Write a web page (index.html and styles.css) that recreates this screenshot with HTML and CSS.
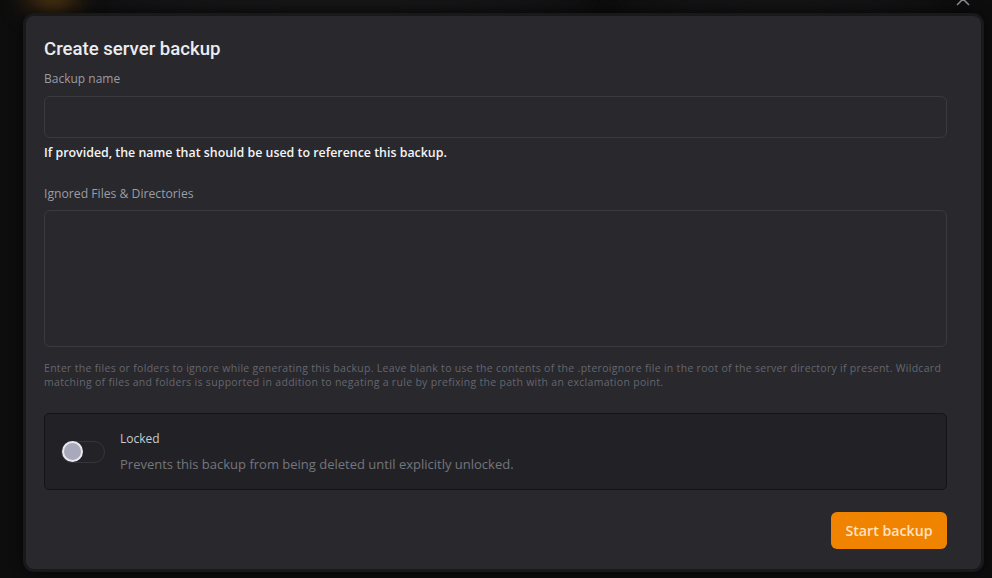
FILE: index.html
```html
<!DOCTYPE html>
<html>
<head>
<meta charset="utf-8">
<link rel="stylesheet" href="styles.css">
</head>
<body>
<div class="backdrop">
  <div class="blob blob-orange"></div>
  <div class="blob blob-grey"></div>
  <div class="blob blob-grey2"></div>
  <svg class="close" width="16" height="16" viewBox="0 0 16 16"><path d="M2 2L14 14M14 2L2 14" stroke="#8a8a90" stroke-width="1.6" fill="none"/></svg>
</div>
<div class="stage">
  <div class="modal">
    <h2 class="title">Create server backup</h2>
    <label class="label">Backup name</label>
    <div class="input"></div>
    <p class="help-strong">If provided, the name that should be used to reference this backup.</p>
    <label class="label label-second">Ignored Files &amp; Directories</label>
    <div class="input textarea"></div>
    <p class="help-small">Enter the files or folders to ignore while generating this backup. Leave blank to use the contents of the .pteroignore file in the root of the server directory if present. Wildcard matching of files and folders is supported in addition to negating a rule by prefixing the path with an exclamation point.</p>
    <div class="lock-box">
      <div class="toggle"><span class="knob"></span></div>
      <div class="lock-text">
        <div class="lock-title">Locked</div>
        <div class="lock-desc">Prevents this backup from being deleted until explicitly unlocked.</div>
      </div>
    </div>
    <div class="actions">
      <button class="btn">Start backup</button>
    </div>
  </div>
</div>
</body>
</html>
```
FILE: styles.css
```css
html, body {
  margin: 0;
  padding: 0;
  width: 992px;
  height: 578px;
  overflow: hidden;
  background: #0d0d0e;
  font-family: "Open Sans", "Noto Sans", sans-serif;
}
.backdrop {
  position: absolute;
  inset: 0;
  overflow: hidden;
}
.blob {
  position: absolute;
  border-radius: 50%;
  filter: blur(14px);
}
.blob-orange {
  left: 28px;
  top: -22px;
  width: 50px;
  height: 34px;
  background: #5a3a10;
}
.blob-grey {
  left: 90px;
  top: -20px;
  width: 500px;
  height: 30px;
  background: #1a1a1b;
}
.blob-grey2 {
  left: 620px;
  top: -20px;
  width: 320px;
  height: 30px;
  background: #171718;
}
.close {
  position: absolute;
  left: 955px;
  top: -9px;
}
.stage {
  position: relative;
  padding: 16px 0 0 26px;
}
.modal {
  width: 955px;
  height: 553px;
  box-sizing: border-box;
  background: #28282d;
  border-radius: 8px;
  box-shadow: 0 0 0 3px #19191c, 0 0 12px 4px rgba(0,0,0,0.5);
  padding: 21px 34px 0 18px;
  display: flex;
  flex-direction: column;
}
.title {
  margin: 0;
  font-family: Roboto, "Liberation Sans", sans-serif;
  font-weight: 500;
  font-size: 18.6px;
  line-height: 24px;
  color: #ececef;
}
.label {
  display: block;
  margin-top: 10px;
  font-size: 12px;
  line-height: 16px;
  color: #9c9ca3;
}
.label-second {
  margin-top: 24px;
  font-size: 12.2px;
}
.input {
  margin-top: 9px;
  height: 42px;
  box-sizing: border-box;
  border: 1px solid #3a3a40;
  border-radius: 6px;
  background: #28282d;
}
.textarea {
  margin-top: 8px;
  height: 137px;
}
.help-strong {
  margin: 6px 0 0;
  font-size: 12.4px;
  font-weight: 600;
  line-height: 18px;
  color: #f4f4f6;
}
.help-small {
  margin: 14px 0 0;
  font-size: 10.5px;
  letter-spacing: 0.3px;
  line-height: 14px;
  color: #66666d;
}
.lock-box {
  margin-top: 24px;
  height: 77px;
  box-sizing: border-box;
  border: 1px solid #141416;
  border-radius: 5px;
  background: #222226;
  display: flex;
  align-items: center;
  padding: 0 16px;
  gap: 15px;
}
.toggle {
  width: 44px;
  height: 22px;
  box-sizing: border-box;
  border: 1px solid #35353b;
  border-radius: 11px;
  background: #232327;
  position: relative;
}
.knob {
  position: absolute;
  left: 0px;
  top: -1px;
  width: 21px;
  height: 21px;
  box-sizing: border-box;
  border-radius: 50%;
  background: #a9a9bc;
  border: 2px solid #e9e9ef;
}
.lock-text {
  display: flex;
  flex-direction: column;
  gap: 9px;
  margin-top: 0px;
}
.lock-title {
  font-size: 12px;
  line-height: 16px;
  color: #c9c9ce;
}
.lock-desc {
  font-size: 13px;
  line-height: 17px;
  color: #75757c;
}
.actions {
  margin-top: 22px;
  display: flex;
  justify-content: flex-end;
}
.btn {
  width: 116px;
  height: 37px;
  border: none;
  border-radius: 6px;
  background: #f08400;
  color: #ffe1c2;
  font-family: "Open Sans", "Noto Sans", sans-serif;
  font-weight: 600;
  font-size: 14.2px;
  padding: 0;
}
```
